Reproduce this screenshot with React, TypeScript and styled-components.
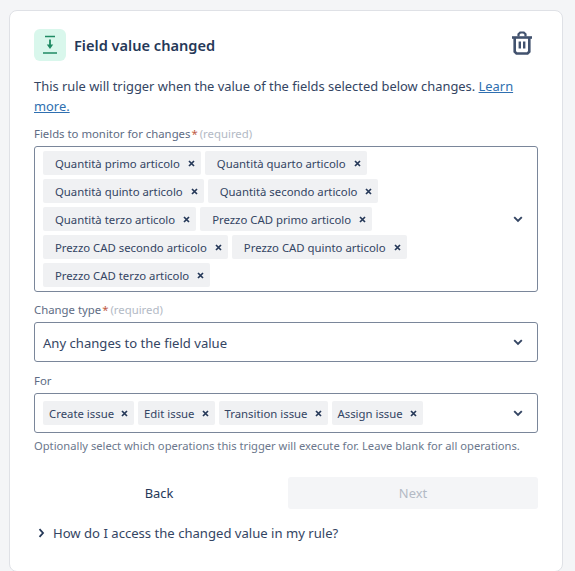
import * as React from "react";
import styled, { createGlobalStyle } from "styled-components";

const FIELDS = [
  ["Quantità primo articolo", "Quantità quarto articolo"],
  ["Quantità quinto articolo", "Quantità secondo articolo"],
  ["Quantità terzo articolo", "Prezzo CAD primo articolo"],
  ["Prezzo CAD secondo articolo", "Prezzo CAD quinto articolo"],
  ["Prezzo CAD terzo articolo"]
];

const OPERATIONS = ["Create issue", "Edit issue", "Transition issue", "Assign issue"];

const GlobalStyle = createGlobalStyle`
  html, body {
    margin: 0;
    height: 571px;
    overflow: hidden;
    background: #f4f5f7;
    font-family: "Noto Sans", sans-serif;
    color: #172b4d;
  }
`;

const Page = styled.div`
  padding: 10px 12px 0 9px;
`;

const Card = styled.div`
  height: 562px;
  box-sizing: border-box;
  background: #fff;
  border: 1px solid #dfe1e6;
  border-radius: 8px;
  padding: 18px 24px 0 24px;
`;

const Header = styled.div`
  display: flex;
  align-items: center;
  justify-content: space-between;
  height: 32px;
`;

const TitleGroup = styled.div`
  display: flex;
  align-items: center;
  gap: 8px;
`;

const IconTile = styled.div`
  width: 32px;
  height: 32px;
  border-radius: 6px;
  background: #d9f7ec;
  display: flex;
  align-items: center;
  justify-content: center;
`;

const Title = styled.h2`
  margin: 0;
  font-size: 14.6px;
  font-weight: 600;
  color: #253858;
`;

const TrashButton = styled.div`
  display: flex;
  margin-right: 5px;
  margin-top: -5px;
`;

const Intro = styled.p`
  margin: 15px 0 0;
  font-size: 12.9px;
  line-height: 20px;
  color: #344563;
`;

const Link = styled.a`
  color: #2f6fb0;
  text-decoration: underline;
`;

const Label = styled.div<{ $top: number }>`
  margin-top: ${p => p.$top}px;
  font-size: 11.35px;
  line-height: 16px;
  color: #5e6c84;
`;

const Star = styled.span`
  color: #bf5b45;
  margin-left: 1px;
`;

const Required = styled.span`
  color: #b3bac5;
  margin-left: 2px;
`;

const Control = styled.div`
  margin-top: 4px;
  border: 1px solid #7a869a;
  border-radius: 3px;
  display: flex;
  align-items: center;
  padding: 4px 14px 4px 8px;
  min-height: 40px;
  box-sizing: border-box;
`;

const TagArea = styled.div`
  flex: 1;
  display: flex;
  flex-direction: column;
  gap: 4px;
`;

const TagRow = styled.div`
  display: flex;
  gap: 4px;
`;

const Tag = styled.span<{ $wide?: boolean }>`
  display: inline-flex;
  align-items: center;
  height: 24px;
  background: #f0f1f3;
  border-radius: 2px;
  font-size: 11.35px;
  color: #344563;
  padding: 0 6px 0 ${p => (p.$wide ? "12px" : "6px")};
  gap: ${p => (p.$wide ? "8px" : "7px")};
`;

const Value = styled.div`
  flex: 1;
  padding-top: 1px;
  font-size: 13.1px;
  color: #344563;
`;

const Hint = styled.div`
  margin-top: 5px;
  font-size: 11.2px;
  line-height: 16px;
  color: #6b778c;
`;

const Buttons = styled.div`
  margin-top: 23px;
  display: grid;
  grid-template-columns: 1fr 1fr;
  gap: 4px;
`;

const Button = styled.div<{ $disabled?: boolean }>`
  height: 32px;
  display: flex;
  align-items: center;
  justify-content: center;
  font-size: 12.9px;
  border-radius: 3px;
  color: ${p => (p.$disabled ? "#b3bac5" : "#253858")};
  background: ${p => (p.$disabled ? "#f4f5f7" : "transparent")};
`;

const Disclosure = styled.div`
  margin-top: 14px;
  padding-left: 4px;
  display: flex;
  align-items: center;
  gap: 8px;
  font-size: 13.1px;
  line-height: 20px;
  color: #344563;
`;

function CloseIcon() {
  return (
    <svg width="7" height="7" viewBox="0 0 7 7">
      <path d="M1 1l5 5M6 1L1 6" stroke="#253858" strokeWidth="1.7" />
    </svg>
  );
}

function ChevronDown() {
  return (
    <svg width="10" height="7" viewBox="0 0 10 7">
      <path d="M1.2 1.2L5 5l3.8-3.8" fill="none" stroke="#344563" strokeWidth="1.9" />
    </svg>
  );
}

export default function App() {
  return (
    <>
      <GlobalStyle />
      <Page>
        <Card>
          <Header>
            <TitleGroup>
              <IconTile>
                <svg width="16" height="20" viewBox="0 0 16 20">
                  <path d="M3 1.500h10M1 18h14" stroke="#1f8a63" strokeWidth="1.600" fill="none" />
                  <path d="M8 4.500v6" stroke="#1f8a63" strokeWidth="1.800" />
                  <path d="M4.800 9.500h6.400L8 14z" fill="#1f8a63" />
                </svg>
              </IconTile>
              <Title>Field value changed</Title>
            </TitleGroup>
            <TrashButton>
              <svg width="22" height="24" viewBox="0 0 22 24">
                <path d="M1 6.500h20" stroke="#42526e" strokeWidth="2.600" />
                <path d="M7.500 5.500V3.200L9.200 1.500h3.600l1.700 1.700v2.300" fill="none" stroke="#42526e" strokeWidth="2.200" />
                <path d="M3.700 6.500v14.200l1.800 1.800h11l1.800-1.800V6.500" fill="none" stroke="#42526e" strokeWidth="2.600" />
                <path d="M8.800 10.500v7M13.200 10.500v7" stroke="#42526e" strokeWidth="2.400" />
              </svg>
            </TrashButton>
          </Header>
          <Intro>
            This rule will trigger when the value of the fields selected below changes. <Link>Learn more.</Link>
          </Intro>
          <Label $top={10}>
            Fields to monitor for changes<Star>*</Star>
            <Required>(required)</Required>
          </Label>
          <Control>
            <TagArea>
              {FIELDS.map(row => (
                <TagRow key={row[0]}>
                  {row.map(name => (
                    <Tag $wide key={name}>
                      {name}
                      <CloseIcon />
                    </Tag>
                  ))}
                </TagRow>
              ))}
            </TagArea>
            <ChevronDown />
          </Control>
          <Label $top={10}>
            Change type<Star>*</Star>
            <Required>(required)</Required>
          </Label>
          <Control>
            <Value>Any changes to the field value</Value>
            <ChevronDown />
          </Control>
          <Label $top={11}>For</Label>
          <Control>
            <TagArea>
              <TagRow>
                {OPERATIONS.map(name => (
                  <Tag key={name}>
                    {name}
                    <CloseIcon />
                  </Tag>
                ))}
              </TagRow>
            </TagArea>
            <ChevronDown />
          </Control>
          <Hint>Optionally select which operations this trigger will execute for. Leave blank for all operations.</Hint>
          <Buttons>
            <Button>Back</Button>
            <Button $disabled>Next</Button>
          </Buttons>
          <Disclosure>
            <svg width="7" height="10" viewBox="0 0 7 10">
              <path d="M1.500 1.200L5 5 1.500 8.800" fill="none" stroke="#253858" strokeWidth="1.800" />
            </svg>
            How do I access the changed value in my rule?
          </Disclosure>
        </Card>
      </Page>
    </>
  );
}
